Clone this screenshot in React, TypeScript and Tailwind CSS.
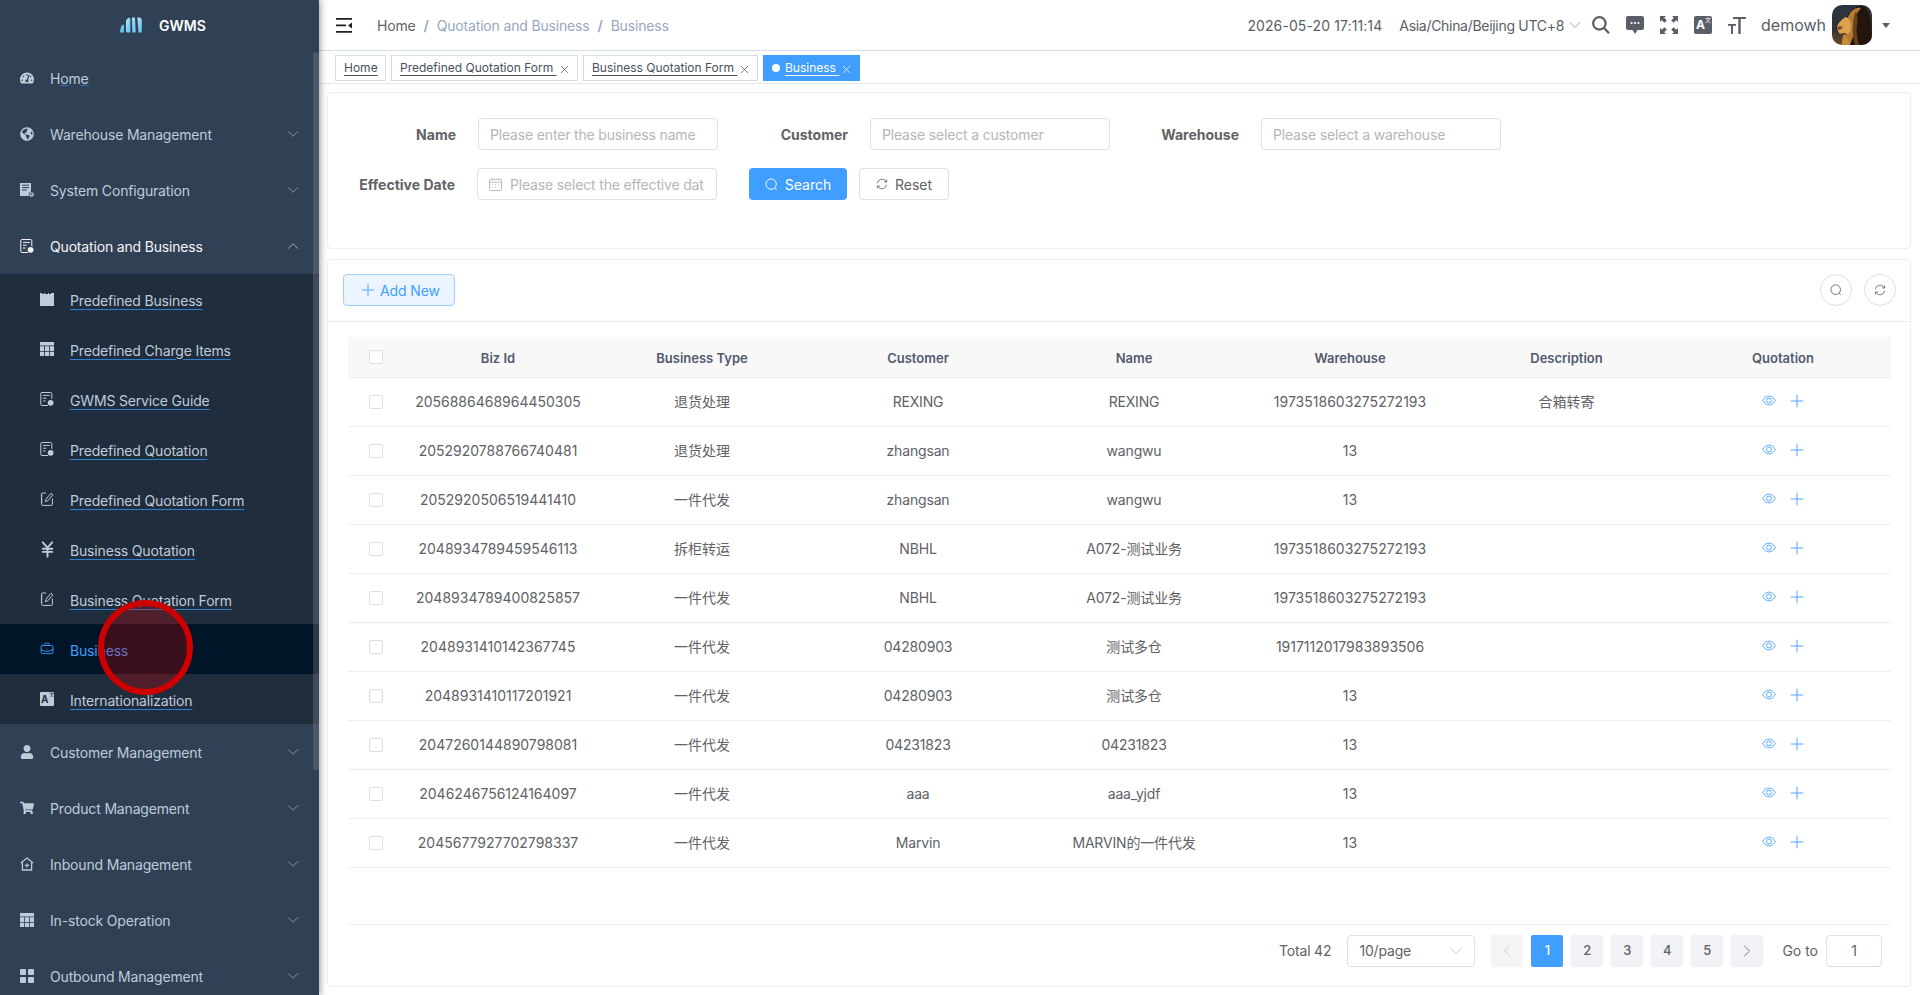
import { type ReactNode } from "react";
import { ChevronDown, ChevronUp, ChevronLeft, ChevronRight, Plus, JapaneseYen, BriefcaseBusiness, X } from "lucide-react";
import { FaGlobeAmericas, FaShoppingCart, FaTachometerAlt, FaUser } from "react-icons/fa";

const FONT = "font-[Inter,'Noto_Sans_CJK_SC',sans-serif]";

const ServerIcon = () => (
  <svg viewBox="0 0 14 14" className="w-[14px] h-[14px]" fill="currentColor">
    <path d="M0 0h11v8.6a3 3 0 0 0-2 4.4H0z" />
    <path d="M2 2.2h7M2 4.6h7M2 7h5" stroke="#304156" strokeWidth="1" />
    <circle cx="11.6" cy="11.4" r="1.6" fill="none" stroke="currentColor" strokeWidth="1.3" />
  </svg>
);

const DocIcon = () => (
  <svg viewBox="0 0 14 14" className="w-[14px] h-[14px]" fill="none" stroke="currentColor">
    <path d="M8 13.5H2A1.2 1.2 0 0 1 .8 12.3V1.7A1.2 1.2 0 0 1 2 .5h8.6a1.2 1.2 0 0 1 1.2 1.2V7" strokeWidth="1" />
    <path d="M3 3.4h6.8M3 6.2h3.5M3 9h2.6" strokeWidth="1" />
    <circle cx="10.6" cy="10.8" r="2.9" fill="currentColor" stroke="none" />
  </svg>
);

const EditDocIcon = () => (
  <svg viewBox="0 0 14 14" className="w-[14px] h-[14px]" fill="none" stroke="currentColor" strokeWidth="1">
    <path d="M6 1H2.6a1 1 0 0 0-1 1v10.4a1 1 0 0 0 1 1h8.8a1 1 0 0 0 1-1V6.5" />
    <path d="M.8 4h1.6M.8 7h1.6M.8 10h1.6" />
    <path d="M5.4 9.6 6 7.2l5-6 1.8 1.6-5 6z" />
  </svg>
);

const CalendarBlock = () => (
  <svg viewBox="0 0 14 14" className="w-[14px] h-[14px]" fill="currentColor">
    <path d="M0 1h2v1h2V1h1v1h3V1h1v1h2V1h3v13H0z" />
  </svg>
);

const TableBlock = () => (
  <svg viewBox="0 0 14 14" className="w-[14px] h-[14px]" fill="currentColor">
    <path d="M0 0h14v3.4H0zM0 4.2h4.2V9H0zM5 4.2h4V9H5zM9.8 4.2H14V9H9.8zM0 9.8h4.2V14H0zM5 9.8h4V14H5zM9.8 9.8H14V14H9.8z" />
  </svg>
);

const TransIcon = ({ dark }: { dark?: boolean }) => (
  <span
    className={
      dark
        ? "relative flex w-[18px] h-[18px] items-center rounded-[2px] bg-[#5a5e66] text-white text-[12px] font-bold pl-[2px] leading-none"
        : "relative flex w-[14px] h-[14px] items-center rounded-[1px] bg-[#bfcbd9] text-[#1f2d3d] text-[10px] font-bold pl-[1px] leading-none"
    }
  >
    A
    <span className={dark ? "absolute right-[1px] top-[1px] text-[6px] font-normal" : "absolute right-[0px] top-[0px] text-[5px] font-normal"}>文</span>
  </span>
);

const InboxHome = () => (
  <svg viewBox="0 0 14 14" className="w-[14px] h-[14px]" fill="none" stroke="currentColor" strokeWidth="1.3">
    <path d="M.8 6 7 1l6.2 5M2.4 5.4V13h9.2V5.4" />
    <path d="M4.8 8.4h4.4M7 6.4v4" strokeWidth="1.1" />
  </svg>
);

const GridIcon = () => (
  <svg viewBox="0 0 14 14" className="w-[14px] h-[14px]" fill="currentColor">
    <rect x="0" y="0" width="6" height="6" rx="1" />
    <rect x="8" y="0" width="6" height="6" rx="1" />
    <rect x="0" y="8" width="6" height="6" rx="1" />
    <rect x="8" y="8" width="6" height="6" rx="1" />
  </svg>
);

const Logo = () => (
  <svg viewBox="0 0 22 16" className="w-[22px] h-[16px]">
    <defs>
      <linearGradient id="lg" x1="0" y1="0" x2="1" y2="1">
        <stop offset="0" stopColor="#b6e6fa" />
        <stop offset="1" stopColor="#5cbcf0" />
      </linearGradient>
    </defs>
    <path d="M1.4 8.4 4 7.6v8H1.4A1.4 1.4 0 0 1 0 14z" fill="#62c0ef" />
    <path d="M6 3.4 8.4.4l2 1v14.2H7l-1-1z" fill="url(#lg)" />
    <path d="M12 .6h3l.8 15H12.4z" fill="url(#lg)" />
    <path d="M17.4.6H20l1.8 1.4V15.6H18.6z" fill="url(#lg)" />
  </svg>
);

const SearchThin = ({ className = "" }: { className?: string }) => (
  <svg viewBox="0 0 14 14" className={className} fill="none" stroke="currentColor" strokeWidth="1">
    <circle cx="6.6" cy="6.6" r="5.6" />
    <path d="m10.6 10.8 2 2" />
  </svg>
);

const RefreshThin = ({ className = "" }: { className?: string }) => (
  <svg viewBox="0 0 14 14" className={className} fill="none" stroke="currentColor" strokeWidth="1">
    <path d="M1.6 6.2A5.4 5.4 0 0 1 11 3.2l1.2 1.4" />
    <path d="M12.4 7.8A5.4 5.4 0 0 1 3 10.8L1.8 9.4" />
    <path d="M12.4 1.8v2.9H9.6M1.6 12.2V9.3h2.8" />
  </svg>
);

const ViewEye = () => (
  <svg viewBox="0 0 16 12" className="w-[14px] h-[11px]" fill="none" stroke="#409eff" strokeWidth="1">
    <path d="M.7 6C2.8 2.6 5.2 1 8 1s5.2 1.6 7.3 5C13.2 9.4 10.8 11 8 11S2.8 9.4.7 6Z" />
    <circle cx="8" cy="6" r="2.8" />
  </svg>
);

// lion photo, painted roughly
const Avatar = () => (
  <svg viewBox="0 0 40 40" className="w-[40px] h-[40px] rounded-[10px]">
    <defs>
      <linearGradient id="sky" x1="0" y1="0" x2="0" y2="1">
        <stop offset="0" stopColor="#2a3442" />
        <stop offset="0.6" stopColor="#2f3238" />
        <stop offset="1" stopColor="#6b4a24" />
      </linearGradient>
      <filter id="soft">
        <feGaussianBlur stdDeviation="0.6" />
      </filter>
    </defs>
    <rect width="40" height="40" fill="url(#sky)" />
    <g filter="url(#soft)">
      <path d="M15 12C19 3 27-1 33 2c5 4 7 16 7 38H13c-2-5-1-9 1-13z" fill="#21140c" />
      <path d="M16 12c3-7 8-10 13-9-3 3-5 7-6 12-2 5-2 9-1 14l-4 11h-6c2-8 2-14 2-20z" fill="#b67a30" />
      <path d="M24 6c2 4 2 9 1 14-1 6 0 13 2 20h-4c-2-8-3-14-2-20 0-5 1-10 3-14z" fill="#6b4118" />
      <path d="M5 22c1-4 5-8 9-10 3 1 5 5 5 10 0 3-1 6-3 7-2 0-3-1-5-1-2 1-3 1-4 0-1-2-2-4-2-6z" fill="#dca24e" />
      <path d="M5 22c2-1 4-1 6 0-1 2-3 3-5 3z" fill="#7a4f20" />
      <path d="M12 29c3 2 5 6 5 11h-7c0-4 0-8 2-11z" fill="#c58a3a" />
    </g>
  </svg>
);

type Parent = { name: ReactNode; icon: ReactNode; open?: boolean; noArrow?: boolean };

const topMenus: Parent[] = [
  { name: "Warehouse Management", icon: <FaGlobeAmericas size={14} /> },
  { name: "System Configuration", icon: <ServerIcon /> },
  { name: "Quotation and Business", icon: <DocIcon />, open: true },
];

const subMenus = [
  { name: "Predefined Business", icon: <CalendarBlock /> },
  { name: "Predefined Charge Items", icon: <TableBlock /> },
  { name: "GWMS Service Guide", icon: <DocIcon /> },
  { name: "Predefined Quotation", icon: <DocIcon /> },
  { name: "Predefined Quotation Form", icon: <EditDocIcon /> },
  { name: "Business Quotation", icon: <JapaneseYen size={19} strokeWidth={2.4} className="shrink-0" /> },
  { name: "Business Quotation Form", icon: <EditDocIcon /> },
  { name: "Business", icon: <BriefcaseBusiness size={14} strokeWidth={1.5} />, active: true },
  { name: "Internationalization", icon: <TransIcon /> },
];

const bottomMenus: Parent[] = [
  { name: "Customer Management", icon: <FaUser size={14} /> },
  { name: "Product Management", icon: <FaShoppingCart size={14} /> },
  { name: "Inbound Management", icon: <InboxHome /> },
  { name: "In-stock Operation", icon: <TableBlock /> },
  { name: "Outbound Management", icon: <GridIcon /> },
];

const rows = [
  ["2056886468964450305", "退货处理", "REXING", "REXING", "1973518603275272193", "合箱转寄"],
  ["2052920788766740481", "退货处理", "zhangsan", "wangwu", "13", ""],
  ["2052920506519441410", "一件代发", "zhangsan", "wangwu", "13", ""],
  ["2048934789459546113", "拆柜转运", "NBHL", "A072-测试业务", "1973518603275272193", ""],
  ["2048934789400825857", "一件代发", "NBHL", "A072-测试业务", "1973518603275272193", ""],
  ["2048931410142367745", "一件代发", "04280903", "测试多仓", "1917112017983893506", ""],
  ["2048931410117201921", "一件代发", "04280903", "测试多仓", "13", ""],
  ["2047260144890798081", "一件代发", "04231823", "04231823", "13", ""],
  ["2046246756124164097", "一件代发", "aaa", "aaa_yjdf", "13", ""],
  ["2045677927702798337", "一件代发", "Marvin", "MARVIN的一件代发", "13", ""],
];

const MenuRow = ({ item }: { item: Parent }) => (
  <div className={`flex h-[56px] items-center pl-[20px] pr-[17px] text-[14px] tracking-[-0.17px] ${item.open ? "text-[#f4f4f5]" : "text-[#bfcbd9]"}`}>
    <span className="flex w-[14px] h-[14px] items-center justify-center mr-[16px]">{item.icon}</span>
    <span className={item.noArrow ? "" : "mt-[1px]"}>{item.name}</span>
    {item.noArrow ? null : item.open ? (
      <ChevronUp size={18} strokeWidth={0.8} className="ml-auto" />
    ) : (
      <ChevronDown size={18} strokeWidth={0.8} className="ml-auto" />
    )}
  </div>
);

const Sidebar = () => (
  <aside className="relative z-10 w-[319px] h-[995px] shrink-0 overflow-hidden bg-[#304156] shadow-[2px_0_6px_rgba(0,21,41,0.35)]">
    <div className="flex h-[50px] items-center pl-[120px]">
      <Logo />
      <span className="ml-[17px] text-[14px] font-semibold text-white">GWMS</span>
    </div>
    <MenuRow
      item={{
        noArrow: true,
        name: (
          <>
            H<span className="underline decoration-[#2f6fb5]">o</span>m<span className="underline decoration-[#2f6fb5]">e</span>
          </>
        ),
        icon: <FaTachometerAlt size={14} />,
      }}
    />
    <div className="flex flex-col">
      {topMenus.map((m, i) => (
        <MenuRow key={i} item={m} />
      ))}
    </div>
    <div className="flex flex-col bg-[#1f2d3d]">
      {subMenus.map((s) => (
        <div
          key={s.name}
          className={`flex h-[50px] items-center pl-[40px] text-[14px] tracking-[-0.17px] ${s.active ? "bg-[#001528] text-[#409eff]" : "text-[#bfcbd9]"}`}
        >
          <span className="flex w-[14px] h-[14px] items-center justify-center mr-[16px]">{s.icon}</span>
          <span className={`mt-[2px] ${s.active ? "" : "underline decoration-[#2f7fd0] underline-offset-[3px]"}`}>{s.name}</span>
        </div>
      ))}
    </div>
    {bottomMenus.map((m, i) => (
      <MenuRow key={i} item={m} />
    ))}
    {/* scrollbar thumb */}
    <div className="absolute right-0 top-[52px] h-[718px] w-[6px] rounded-[4px] bg-[rgba(144,147,153,0.3)]" />
  </aside>
);

const Header = () => (
  <header className="flex h-[51px] items-center border-b border-[#d8dce5] pl-[17px] pr-[30px] text-[14px] shrink-0">
    <svg viewBox="0 0 16 15" className="w-[16px] h-[15px]" fill="#1f1f1f">
      <path d="M0 0h16v1.8H0zM0 6.4h10v1.8H0zM0 13h16v1.8H0zM16 4.4v6l-4-3z" />
    </svg>
    <nav className="ml-[25px] flex items-center tracking-[-0.17px]">
      <span className="text-[#606266]">Home</span>
      <span className="mx-[8px] text-[#97a8be] font-semibold">/</span>
      <span className="text-[#97a8be]">Quotation and Business</span>
      <span className="mx-[8px] text-[#97a8be] font-semibold">/</span>
      <span className="text-[#97a8be]">Business</span>
    </nav>
    <div className="ml-auto flex items-center text-[#5a5e66]">
      <span className="tracking-[0.1px]">2026-05-20 17:11:14</span>
      <span className="ml-[17px] tracking-[-0.3px]">Asia/China/Beijing UTC+8</span>
      <ChevronDown size={20} strokeWidth={1} className="ml-[1px] text-[#909399]" />
      <div className="ml-[7px] flex items-center gap-[16px]">
        <svg viewBox="0 0 18 18" className="w-[18px] h-[18px]" fill="none" stroke="#5a5e66" strokeWidth="2.2">
          <circle cx="7.4" cy="7.4" r="6.2" />
          <path d="m11.8 11.8 5.2 5.4" />
        </svg>
        <svg viewBox="0 0 18 18" className="w-[18px] h-[18px]" fill="#5a5e66">
          <path d="M2 0h14a2 2 0 0 1 2 2v10a2 2 0 0 1-2 2h-4.5L9 18l-2.5-4H2a2 2 0 0 1-2-2V2a2 2 0 0 1 2-2z" />
          <circle cx="5.6" cy="7" r="1.1" fill="#fff" />
          <circle cx="9" cy="7" r="1.1" fill="#fff" />
          <circle cx="12.4" cy="7" r="1.1" fill="#fff" />
        </svg>
        <svg viewBox="0 0 18 18" className="w-[18px] h-[18px]" fill="#5a5e66">
          <path d="M0 0h6L4.2 1.8l2.6 2.6-2.4 2.4-2.6-2.6L0 6zM18 0v6l-1.8-1.8-2.6 2.6-2.4-2.4 2.6-2.6L12 0zM0 18v-6l1.8 1.8 2.6-2.6 2.4 2.4-2.6 2.6L6 18zM18 18h-6l1.8-1.8-2.6-2.6 2.4-2.4 2.6 2.6L18 12z" />
        </svg>
        <TransIcon dark />
        <svg viewBox="0 0 18 18" className="w-[18px] h-[18px]" fill="#5a5e66">
          <path d="M5 1h13v2h-5.3v15h-2.4V3H5zM0 8h8v1.8H5V18H3V9.8H0z" />
        </svg>
      </div>
      <span className="ml-[15px] text-[16px] text-[#5a5e66]">demowh</span>
      <span className="ml-[6px]">
        <Avatar />
      </span>
      <span className="ml-[10px] h-0 w-0 border-x-[4px] border-t-[5px] border-x-transparent border-t-[#5a5e66]" />
    </div>
  </header>
);

const tabs = [
  { name: "Home", w: "w-[51px]" },
  { name: "Predefined Quotation Form", close: true, w: "w-[187px]" },
  { name: "Business Quotation Form", close: true, w: "w-[175px]" },
];

const TagsBar = () => (
  <div className="flex h-[33px] shrink-0 items-start gap-[5px] border-b border-[#e4e7ed] pl-[16px] pt-[4px] text-[12px] text-[#495060]">
    {tabs.map((t) => (
      <div key={t.name} className={`flex h-[26px] ${t.w} items-center border border-[#d8dce5] bg-white pl-[8px]`}>
        <span className="underline underline-offset-[3px] whitespace-pre">{t.name + (t.close ? " " : "")}</span>
        {t.close && <X size={13} strokeWidth={1.3} className="ml-[1px] mt-[2px] shrink-0" />}
      </div>
    ))}
    <div className="flex h-[26px] w-[97px] items-center bg-[#409eff] pl-[9px] text-white">
      <span className="mr-[5px] h-[8px] w-[8px] rounded-full bg-white" />
      <span className="underline underline-offset-[3px] whitespace-pre">{"Business "}</span>
      <X size={13} strokeWidth={1.3} className="ml-[1px] mt-[2px] shrink-0" />
    </div>
  </div>
);

const TextInput = ({ placeholder }: { placeholder: string }) => (
  <div className="flex h-[32px] w-[240px] items-center rounded-[4px] border border-[#dcdfe6] bg-white px-[11px] text-[14px] tracking-[-0.17px] text-[#b4b6bb]">
    {placeholder}
  </div>
);

const FormLabel = ({ text, w }: { text: string; w: string }) => (
  <label className={`${w} mr-[22px] text-right text-[14px] font-bold text-[#606266]`}>{text}</label>
);

const SearchCard = () => (
  <section className="h-[157px] rounded-[4px] border border-[#ebeef5] pt-[25px]">
    <div className="flex items-center">
      <FormLabel text="Name" w="w-[128px]" />
      <TextInput placeholder="Please enter the business name" />
      <FormLabel text="Customer" w="w-[130px]" />
      <TextInput placeholder="Please select a customer" />
      <FormLabel text="Warehouse" w="w-[129px]" />
      <TextInput placeholder="Please select a warehouse" />
    </div>
    <div className="mt-[18px] flex items-center">
      <FormLabel text="Effective Date" w="w-[127px]" />
      <div className="flex h-[32px] w-[240px] items-center whitespace-nowrap rounded-[4px] border border-[#dcdfe6] pl-[11px] text-[14px] tracking-[-0.17px] text-[#b4b6bb]">
        <svg viewBox="0 0 14 14" className="mr-[8px] h-[13px] w-[13px] shrink-0" fill="none" stroke="#b4b6bb" strokeWidth="1">
          <rect x="0.5" y="1.5" width="13" height="12" rx="1" />
          <path d="M.5 4.5h13M3 .5v2M11 .5v2M3 7h1M6.5 7h1M10 7h1M3 10h1M6.5 10h1M10 10h1" />
        </svg>
        <span>Please select the effective dat</span>
      </div>
      <button className="ml-[32px] flex h-[32px] w-[98px] items-center justify-center rounded-[4px] bg-[#409eff] text-[14px] text-white">
        <SearchThin className="mr-[7px] h-[13px] w-[13px]" />
        Search
      </button>
      <button className="ml-[12px] flex h-[32px] w-[90px] items-center justify-center rounded-[4px] border border-[#dcdfe6] text-[14px] text-[#606266]">
        <RefreshThin className="mr-[7px] h-[12px] w-[12px]" />
        Reset
      </button>
    </div>
  </section>
);

const Check = () => <span className="inline-block h-[14px] w-[14px] rounded-[2px] border border-[#dcdfe6] bg-white align-middle" />;

const PageBtn = ({ children, active, disabled }: { children: ReactNode; active?: boolean; disabled?: boolean }) => (
  <span
    className={`flex h-[32px] w-[32px] items-center justify-center rounded-[2px] text-[13px] font-medium ${
      active ? "bg-[#409eff] text-white" : disabled ? "bg-[#f4f4f5] text-[#c0c4cc]" : "bg-[#f0f2f5] text-[#606266]"
    }`}
  >
    {children}
  </span>
);

const headers = ["Biz Id", "Business Type", "Customer", "Name", "Warehouse", "Description", "Quotation"];

const TableCard = () => (
  <section className="mt-[10px] h-[728px] rounded-[4px] border border-[#ebeef5]">
    <div className="flex items-start justify-between border-b border-[#ebeef5] pl-[15px] pr-[14px] pt-[14px] pb-[15px]">
      <button className="flex h-[32px] w-[112px] items-center justify-center rounded-[4px] border border-[#a0cfff] bg-[#ecf5ff] text-[14px] tracking-[-0.1px] text-[#409eff]">
        <Plus size={20} strokeWidth={1.1} className="mr-[2px]" />
        Add New
      </button>
      <div className="flex gap-[12px] text-[#606266]">
        <span className="flex h-[32px] w-[32px] items-center justify-center rounded-full border border-[#dcdfe6]">
          <SearchThin className="h-[12px] w-[12px]" />
        </span>
        <span className="flex h-[32px] w-[32px] items-center justify-center rounded-full border border-[#dcdfe6]">
          <RefreshThin className="h-[12px] w-[12px]" />
        </span>
      </div>
    </div>
    <div className="px-[20px] pt-[15px]">
      <table className="w-[1543px] table-fixed border-collapse text-center text-[14px] text-[#606266]">
        <colgroup>
          <col className="w-[54px]" />
          <col className="w-[192px]" />
          <col className="w-[216px]" />
          <col className="w-[216px]" />
          <col className="w-[216px]" />
          <col className="w-[216px]" />
          <col className="w-[217px]" />
          <col className="w-[216px]" />
        </colgroup>
        <thead>
          <tr className="h-[40px] border-b border-[#ebeef5] bg-[#f8f8f9] text-[13px] font-semibold text-[#515a6e]">
            <th className="pl-[2px]">
              <Check />
            </th>
            {headers.map((h) => (
              <th key={h} className="pt-[4px] font-semibold">
                {h}
              </th>
            ))}
          </tr>
        </thead>
        <tbody>
          {rows.map((r) => (
            <tr key={r[0]} className="h-[49px] border-b border-[#ebeef5]">
              <td className="pl-[2px] pb-[2px]">
                <Check />
              </td>
              {r.map((c, i) => (
                <td key={i} className={i === 2 || i === 3 ? "tracking-[-0.17px]" : ""}>
                  {c}
                </td>
              ))}
              <td className="pb-[2px]">
                <span className="flex items-center justify-center gap-[11px] pl-[3px]">
                  <ViewEye />
                  <Plus size={20} strokeWidth={1.1} className="text-[#409eff]" />
                </span>
              </td>
            </tr>
          ))}
        </tbody>
      </table>
      <div className="mt-[56px] flex items-center justify-end border-t border-[#ebeef5] pt-[10px] pr-[8px] text-[14px] text-[#606266]">
        <span className="tracking-[-0.17px]">Total 42</span>
        <span className="ml-[16px] flex h-[32px] w-[128px] items-center justify-between rounded-[4px] border border-[#dcdfe6] pl-[11px] pr-[8px] tracking-[-0.17px]">
          10/page
          <ChevronDown size={20} strokeWidth={1} className="text-[#c0c4cc]" />
        </span>
        <span className="ml-[16px] flex gap-[8px]">
          <PageBtn disabled>
            <ChevronLeft size={20} strokeWidth={1} />
          </PageBtn>
          <PageBtn active>1</PageBtn>
          <PageBtn>2</PageBtn>
          <PageBtn>3</PageBtn>
          <PageBtn>4</PageBtn>
          <PageBtn>5</PageBtn>
          <PageBtn>
            <ChevronRight size={20} strokeWidth={1} />
          </PageBtn>
        </span>
        <span className="ml-[19px]">Go to</span>
        <span className="ml-[8px] flex h-[32px] w-[56px] items-center justify-center rounded-[4px] border border-[#dcdfe6]">1</span>
      </div>
    </div>
  </section>
);

export default function App() {
  return (
    <div className={`relative flex h-[995px] w-[1920px] overflow-hidden bg-white ${FONT}`}>
      <Sidebar />
      <main className="flex h-[995px] min-w-0 flex-1 flex-col">
        <Header />
        <TagsBar />
        <div className="pl-[8px] pr-[9px] pt-[8px]">
          <SearchCard />
          <TableCard />
        </div>
      </main>
      {/* click marker over the page */}
      <div className="absolute left-[98px] top-[600px] z-20 h-[95px] w-[95px] rounded-full border-[6px] border-[#cc0000] bg-[rgba(204,0,0,0.28)]" />
    </div>
  );
}
